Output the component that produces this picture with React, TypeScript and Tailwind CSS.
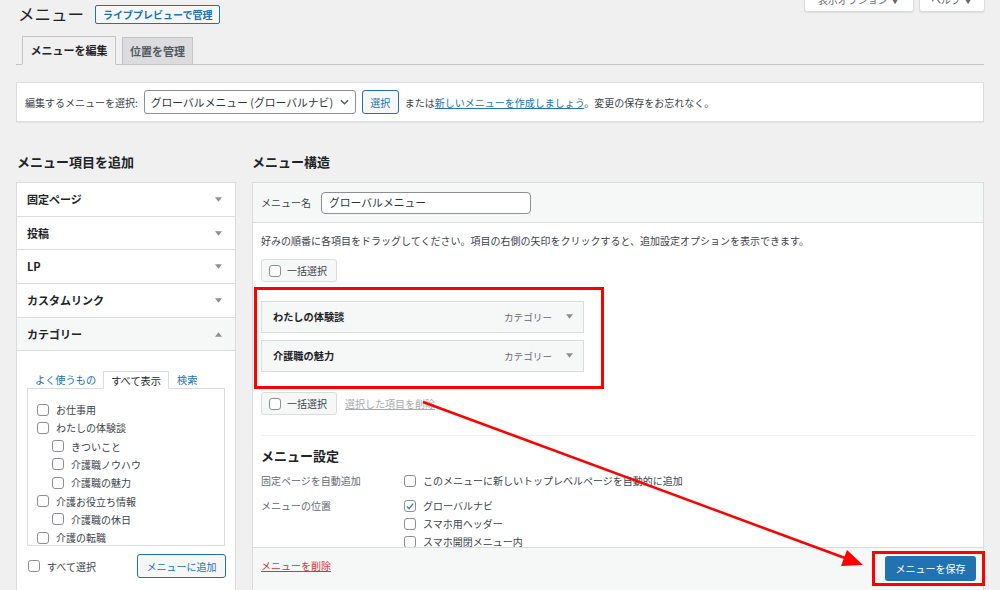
import React from 'react';

const jp = "font-['Noto_Sans_CJK_JP',sans-serif]";

function Check({ checked = false }: { checked?: boolean }) {
  return (
    <span className="w-[12px] h-[12px] shrink-0 rounded-[3px] border border-[#8c8f94] bg-white flex items-center justify-center">
      {checked && (
        <svg viewBox="0 0 12 12" className="w-[11px] h-[11px]">
          <path d="M2.4 6.1 L4.9 8.6 L9.8 2.6" fill="none" stroke="#3582c4" strokeWidth="1.7" />
        </svg>
      )}
    </span>
  );
}

function Tri({ up = false }: { up?: boolean }) {
  return (
    <svg viewBox="0 0 8 5" className="w-[7px] h-[5px]">
      <path d={up ? 'M0 5 L4 0 L8 5 Z' : 'M0 0 L8 0 L4 5 Z'} fill="#8c8f94" />
    </svg>
  );
}

function BulkSelect({ className = '' }: { className?: string }) {
  return (
    <div className={`w-[76px] h-[23px] flex items-center gap-[6px] pl-[7px] rounded-[3px] border border-[#dcdcde] bg-[#f6f7f7] ${className}`}>
      <Check />
      <span className="text-[10px] text-[#3c434a]">一括選択</span>
    </div>
  );
}

const boxes = ['固定ページ', '投稿', 'LP', 'カスタムリンク'];

const categories = [
  { t: 'お仕事用', d: 0 },
  { t: 'わたしの体験談', d: 0 },
  { t: 'きついこと', d: 1 },
  { t: '介護職ノウハウ', d: 1 },
  { t: '介護職の魅力', d: 1 },
  { t: '介護お役立ち情報', d: 0 },
  { t: '介護職の休日', d: 1 },
  { t: '介護の転職', d: 0 },
];

const menuItems = ['わたしの体験談', '介護職の魅力'];

export default function App() {
  return (
    <div className={`relative w-[1000px] h-[590px] overflow-hidden bg-[#f0f0f1] text-[#3c434a] ${jp}`}>
      {/* header */}
      <div className="flex items-start justify-between pl-[18px] pr-[15px]">
        <div className="flex items-center pt-[5px]">
          <h1 className="text-[16.5px] leading-[19px] text-[#1d2327]">メニュー</h1>
          <span className="ml-[11px] h-[19px] px-[7px] flex items-center rounded-[2px] border border-[#2271b1] bg-[#f6f7f7] text-[10px] font-semibold text-[#2271b1]">
            ライブプレビューで管理
          </span>
        </div>
        <div className="flex gap-[5px] -mt-[14px]">
          <div className="w-[110px] h-[26px] flex items-center justify-center rounded-b-[3px] border border-[#dcdcde] bg-white shadow-[0_1px_1px_rgba(0,0,0,0.08)] text-[10px] text-[#646970]">
            表示オプション ▼
          </div>
          <div className="w-[66px] h-[26px] flex items-center justify-center rounded-b-[3px] border border-[#dcdcde] bg-white shadow-[0_1px_1px_rgba(0,0,0,0.08)] text-[10px] text-[#646970]">
            ヘルプ ▼
          </div>
        </div>
      </div>

      {/* tabs */}
      <div className="mx-[16px] mt-[12px] flex items-end gap-[6px] pl-[6px] border-b border-[#c3c4c7]">
        <div className="w-[94px] h-[29px] -mb-px flex items-center justify-center border border-[#c3c4c7] border-b-[#f0f0f1] bg-[#f0f0f1] text-[11px] font-bold text-[#1d2327]">
          メニューを編集
        </div>
        <div className="w-[71px] h-[28px] -mb-px flex items-center justify-center border border-[#c3c4c7] bg-[#dcdcde] text-[11px] font-bold text-[#50575e]">
          位置を管理
        </div>
      </div>

      {/* select bar */}
      <div className="mx-[16px] mt-[17px] h-[40px] flex items-center pl-[8px] border border-[#dcdcde] bg-white shadow-[0_1px_1px_rgba(0,0,0,0.04)] text-[10px]">
        <span>編集するメニューを選択:</span>
        <div className="ml-[6px] w-[212px] h-[24px] flex items-center justify-between pl-[6px] pr-[6px] rounded-[3px] border border-[#8c8f94] bg-white text-[10.8px] text-[#2c3338]">
          <span>グローバルメニュー (グローバルナビ)</span>
          <svg viewBox="0 0 10 6" className="w-[9px] h-[6px]">
            <path d="M1 1 L5 5 L9 1" fill="none" stroke="#50575e" strokeWidth="1.4" />
          </svg>
        </div>
        <span className="ml-[6px] w-[37px] h-[24px] flex items-center justify-center rounded-[3px] border border-[#2271b1] bg-[#f6f7f7] text-[#2271b1]">
          選択
        </span>
        <span className="ml-[6px]">
          または<span className="text-[#2271b1] underline">新しいメニューを作成しましょう</span>。変更の保存をお忘れなく。
        </span>
      </div>

      {/* columns */}
      <div className="mx-[16px] mt-[29px] flex gap-[16px]">
        {/* left */}
        <div className="w-[220px] shrink-0">
          <h2 className="text-[13px] leading-[22px] font-bold text-[#1d2327] pl-[1px]">メニュー項目を追加</h2>
          <div className="mt-[9px] border border-[#dcdcde] bg-white">
            {boxes.map((b) => (
              <div key={b} className="h-[33.7px] flex items-center justify-between pl-[10px] pr-[13px] border-b border-[#dcdcde] text-[11px] font-semibold text-[#1d2327]">
                <span>{b}</span>
                <Tri />
              </div>
            ))}
            <div className="h-[33.7px] flex items-center justify-between pl-[10px] pr-[13px] border-b border-[#dcdcde] bg-[#f6f7f7] text-[11px] font-semibold text-[#1d2327]">
              <span>カテゴリー</span>
              <Tri up />
            </div>
            <div className="pl-[10px] pr-[10px] pt-[20px] pb-[20px]">
              <div className="flex items-end pl-[8px] text-[10.2px]">
                <span className="h-[17px] leading-[17px] text-[#2271b1]">よく使うもの</span>
                <span className="ml-[7px] h-[18px] -mb-px px-[7px] leading-[17px] border border-[#dcdcde] border-b-white bg-white text-[#1d2327] relative z-10">
                  すべて表示
                </span>
                <span className="ml-[8px] h-[17px] leading-[17px] text-[#2271b1]">検索</span>
              </div>
              <div className="w-[198px] h-[158px] overflow-hidden border border-[#dcdcde] pt-[11px] pl-[9px]">
                {categories.map((c) => (
                  <div key={c.t} className={`h-[18.3px] flex items-center gap-[7px] text-[10px] ${c.d ? 'pl-[15px]' : ''}`}>
                    <Check />
                    <span>{c.t}</span>
                  </div>
                ))}
              </div>
              <div className="mt-[8px] flex items-center justify-between pl-[1px] pr-[-1px]">
                <div className="flex items-center gap-[7px] text-[10px]">
                  <Check />
                  <span>すべて選択</span>
                </div>
                <span className="w-[89px] h-[24px] -mr-px flex items-center justify-center rounded-[3px] border border-[#2271b1] bg-[#f6f7f7] text-[10px] text-[#2271b1]">
                  メニューに追加
                </span>
              </div>
            </div>
          </div>
        </div>

        {/* right */}
        <div className="flex-1">
          <h2 className="text-[13px] leading-[22px] font-bold text-[#1d2327]">メニュー構造</h2>
          <div className="mt-[9px] border border-[#dcdcde] bg-white">
            <div className="h-[40px] flex items-center gap-[10px] pl-[8px] border-b border-[#dcdcde] bg-[#f6f7f7] text-[10px]">
              <span>メニュー名</span>
              <div className="w-[210px] h-[22px] flex items-center pl-[7px] rounded-[4px] border border-[#8c8f94] bg-white text-[10.8px] text-[#2c3338]">
                グローバルメニュー
              </div>
            </div>

            <div className="h-[324px] overflow-hidden px-[8px]">
              <p className="pt-[10px] text-[10px] leading-[16px]">
                好みの順番に各項目をドラッグしてください。項目の右側の矢印をクリックすると、追加設定オプションを表示できます。
              </p>
              <BulkSelect className="mt-[10px]" />

              <div className="mt-[5px] -ml-[7px] w-[350px] border-[3px] border-[#ff0000] pl-[4px] pt-[11px] pb-[14px] flex flex-col gap-[7px]">
                {menuItems.map((m) => (
                  <div key={m} className="w-[323px] h-[32px] flex items-center justify-between pl-[11px] pr-[10px] border border-[#dcdcde] bg-[#f6f7f7]">
                    <span className="text-[10.2px] font-bold text-[#1d2327]">{m}</span>
                    <div className="flex items-center gap-[14px]">
                      <span className="text-[9.6px] text-[#646970]">カテゴリー</span>
                      <Tri />
                    </div>
                  </div>
                ))}
              </div>

              <div className="mt-[3px] flex items-center">
                <BulkSelect />
                <span className="ml-[8px] text-[10px] text-[#a7aaad] underline">選択した項目を削除</span>
              </div>

              <div className="mt-[20px] h-px bg-[#f0f0f1]" />

              <h3 className="mt-[10px] text-[13px] leading-[20px] font-bold text-[#1d2327]">メニュー設定</h3>
              <div className="mt-[6px] flex text-[10px] leading-[18px]">
                <span className="w-[143px] text-[#646970]">固定ページを自動追加</span>
                <div className="flex items-center gap-[7px]">
                  <Check />
                  <span>このメニューに新しいトップレベルページを自動的に追加</span>
                </div>
              </div>
              <div className="mt-[7px] flex text-[10px] leading-[18px]">
                <span className="w-[143px] text-[#646970]">メニューの位置</span>
                <div className="flex flex-col">
                  <div className="flex items-center gap-[7px]">
                    <Check checked />
                    <span>グローバルナビ</span>
                  </div>
                  <div className="flex items-center gap-[7px]">
                    <Check />
                    <span>スマホ用ヘッダー</span>
                  </div>
                  <div className="flex items-center gap-[7px]">
                    <Check />
                    <span>スマホ開閉メニュー内</span>
                  </div>
                </div>
              </div>
            </div>

            <div className="h-[60px] flex items-start justify-between pl-[8px] border-t border-[#dcdcde] bg-[#f6f7f7]">
              <span className="mt-[11px] text-[10px] leading-[14px] text-[#d63638] underline">メニューを削除</span>
              <div className="mt-[3px] -mr-[2px] border-[3px] border-[#ff0000] pt-[2px] pb-[2px] pl-[10px] pr-[6px]">
                <span className="w-[91px] h-[25px] flex items-center justify-center rounded-[3px] bg-[#2271b1] text-[10px] text-white">
                  メニューを保存
                </span>
              </div>
            </div>
          </div>
        </div>
      </div>

      {/* annotation arrow */}
      <svg className="absolute inset-0 pointer-events-none" width="1000" height="590" viewBox="0 0 1000 590">
        <line x1="423" y1="402" x2="845" y2="558" stroke="#ff0000" strokeWidth="2.5" />
        <polygon points="863,565 841,566 847,550" fill="#ff0000" />
      </svg>
    </div>
  );
}
